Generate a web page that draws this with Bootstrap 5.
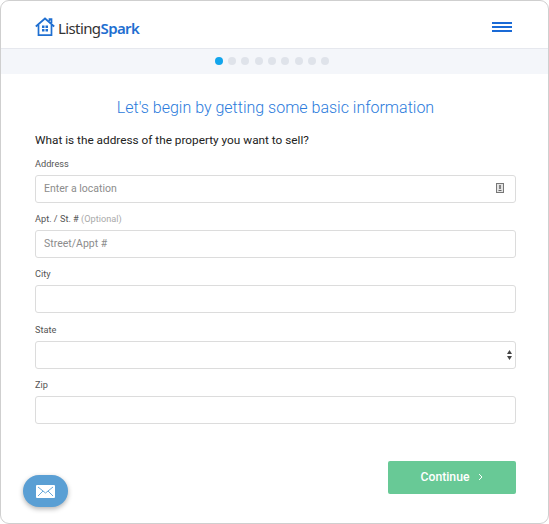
<!DOCTYPE html>
<html lang="en"><head><meta charset="utf-8"><title>ListingSpark</title>
<link rel="stylesheet" href="https://cdn.jsdelivr.net/npm/bootstrap@5.3.0/dist/css/bootstrap.min.css">
<style>
html,body{height:100%;overflow:hidden}
body{font-family:Roboto,"Liberation Sans",sans-serif;background:#fff;color:#222}
.appframe{position:relative;height:524px;border:1px solid #cfcfcf;border-radius:9px;overflow:hidden;background:#fff}
.apphead{height:48px;padding:5px 36px 0 34px;border-bottom:1px solid #e6e8ee}
.brandlock{gap:3px}
.brandmark{font-family:"Noto Sans",sans-serif;font-size:15px;letter-spacing:-.6px;color:#333;line-height:1;padding-top:3px}
.brandmark b{color:#1f6fd1;font-weight:600}
.burger{width:20px;gap:2px}
.burger i{display:block;height:2px;background:#1a6ad6}
.stepstrip{height:25px;background:#f4f6fa;gap:5.3px;padding-right:5px;padding-bottom:2px}
.stepdot{width:8px;height:8px;border-radius:50%;background:#dfe3ea}
.stepdot.on{background:#12a5ec}
.formwrap{padding:0 32px 0 34px}
.pagetitle{font-size:16px;font-weight:300;color:#2b7bdc;line-height:20px;margin:24px 0 13px}
.question{font-size:11.8px;line-height:18px;color:#222;margin-bottom:8px}
.fieldbox{margin-bottom:9.2px}
.fieldlabel{display:block;font-size:9.2px;line-height:13px;color:#555;margin-bottom:5px}
.fieldlabel span{color:#aaa}
.fieldinput.form-control,.fieldinput.form-select{height:28px;min-height:28px;font-size:10.5px;padding:0 8px 1px;border:1px solid #dcdcdc;border-radius:3px;color:#555;background-color:#fff}
.fieldinput::placeholder{color:#8c8c8c}
.fieldinput.form-select{background-image:url("data:image/svg+xml,%3Csvg xmlns='http://www.w3.org/2000/svg' width='5' height='10'%3E%3Cpath d='M2.5 0L5 4H0zM2.5 10L0 6h5z' fill='%23444'/%3E%3C/svg%3E");background-size:5px 10px;background-position:right 3px center}
.fieldicon{position:absolute;right:12px;top:8px;display:block}
.continuebtn.btn{width:128px;height:33px;padding:0;background:#68c996;border:0;border-radius:2px;color:#fff;font-size:12.2px;font-weight:500;gap:9px}
.actionrow{margin-top:37px}
.mailbubble{position:absolute;left:22px;bottom:16px;width:45px;height:32px;border-radius:16px;background:#5a9fd4;box-shadow:0 2px 5px rgba(0,0,0,.3)}
</style></head>
<body>
<div class="appframe">
<header class="apphead d-flex align-items-center justify-content-between">
<div class="brandlock d-flex align-items-center">
<svg width="20" height="20" viewBox="0 0 20 20" fill="none" stroke="#1f6fd1" stroke-width="1.7"><path d="M.8 9.5 10 1.500l9.200 8M14.500 4V2.200h2V6M3.500 8v10.200h13V8"/><g fill="#1f6fd1" stroke="none"><rect x="7" y="8.500" width="2.500" height="2.500"/><rect x="10.500" y="8.500" width="2.500" height="2.500"/><rect x="7" y="12" width="2.500" height="2.500"/><rect x="10.500" y="12" width="2.500" height="2.500"/></g></svg>
<span class="brandmark">Listing<b>Spark</b></span>
</div>
<div class="burger d-flex flex-column"><i></i><i></i><i></i></div>
</header>
<div class="stepstrip d-flex align-items-center justify-content-center">
<span class="stepdot on"></span><span class="stepdot"></span><span class="stepdot"></span><span class="stepdot"></span><span class="stepdot"></span><span class="stepdot"></span><span class="stepdot"></span><span class="stepdot"></span><span class="stepdot"></span>
</div>
<form class="formwrap">
<h1 class="pagetitle text-center">Let's begin by getting some basic information</h1>
<p class="question">What is the address of the property you want to sell?</p>
<div class="fieldbox"><label class="fieldlabel">Address</label>
<div class="position-relative"><input class="form-control fieldinput" placeholder="Enter a location">
<svg class="fieldicon" width="8" height="10" viewBox="0 0 8 10"><rect x=".5" y=".5" width="7" height="9" fill="#e4e4e4" stroke="#777"/><path d="M4 2v4" stroke="#666" stroke-width="1.500"/><path d="M2.500 7.500h3" stroke="#666"/></svg></div></div>
<div class="fieldbox"><label class="fieldlabel">Apt. / St. # <span>(Optional)</span></label><input class="form-control fieldinput" placeholder="Street/Appt #"></div>
<div class="fieldbox"><label class="fieldlabel">City</label><input class="form-control fieldinput"></div>
<div class="fieldbox"><label class="fieldlabel">State</label><select class="form-select fieldinput"><option></option></select></div>
<div class="fieldbox"><label class="fieldlabel">Zip</label><input class="form-control fieldinput"></div>
<div class="actionrow d-flex justify-content-end"><button type="button" class="btn continuebtn d-flex align-items-center justify-content-center">Continue <svg width="5" height="8" viewBox="0 0 5 8" fill="none" stroke="#fff"><path d="m1 1 3 3-3 3"/></svg></button></div>
</form>
<div class="mailbubble d-flex align-items-center justify-content-center">
<svg width="19" height="13" viewBox="0 0 19 13"><rect width="19" height="13" rx="1" fill="#fff"/><path d="M2 2l7.500 6L17 2M2 11l5-5M17 11l-5-5" fill="none" stroke="#6aa9d9" stroke-width="1"/></svg>
</div>
</div>
</body></html>
